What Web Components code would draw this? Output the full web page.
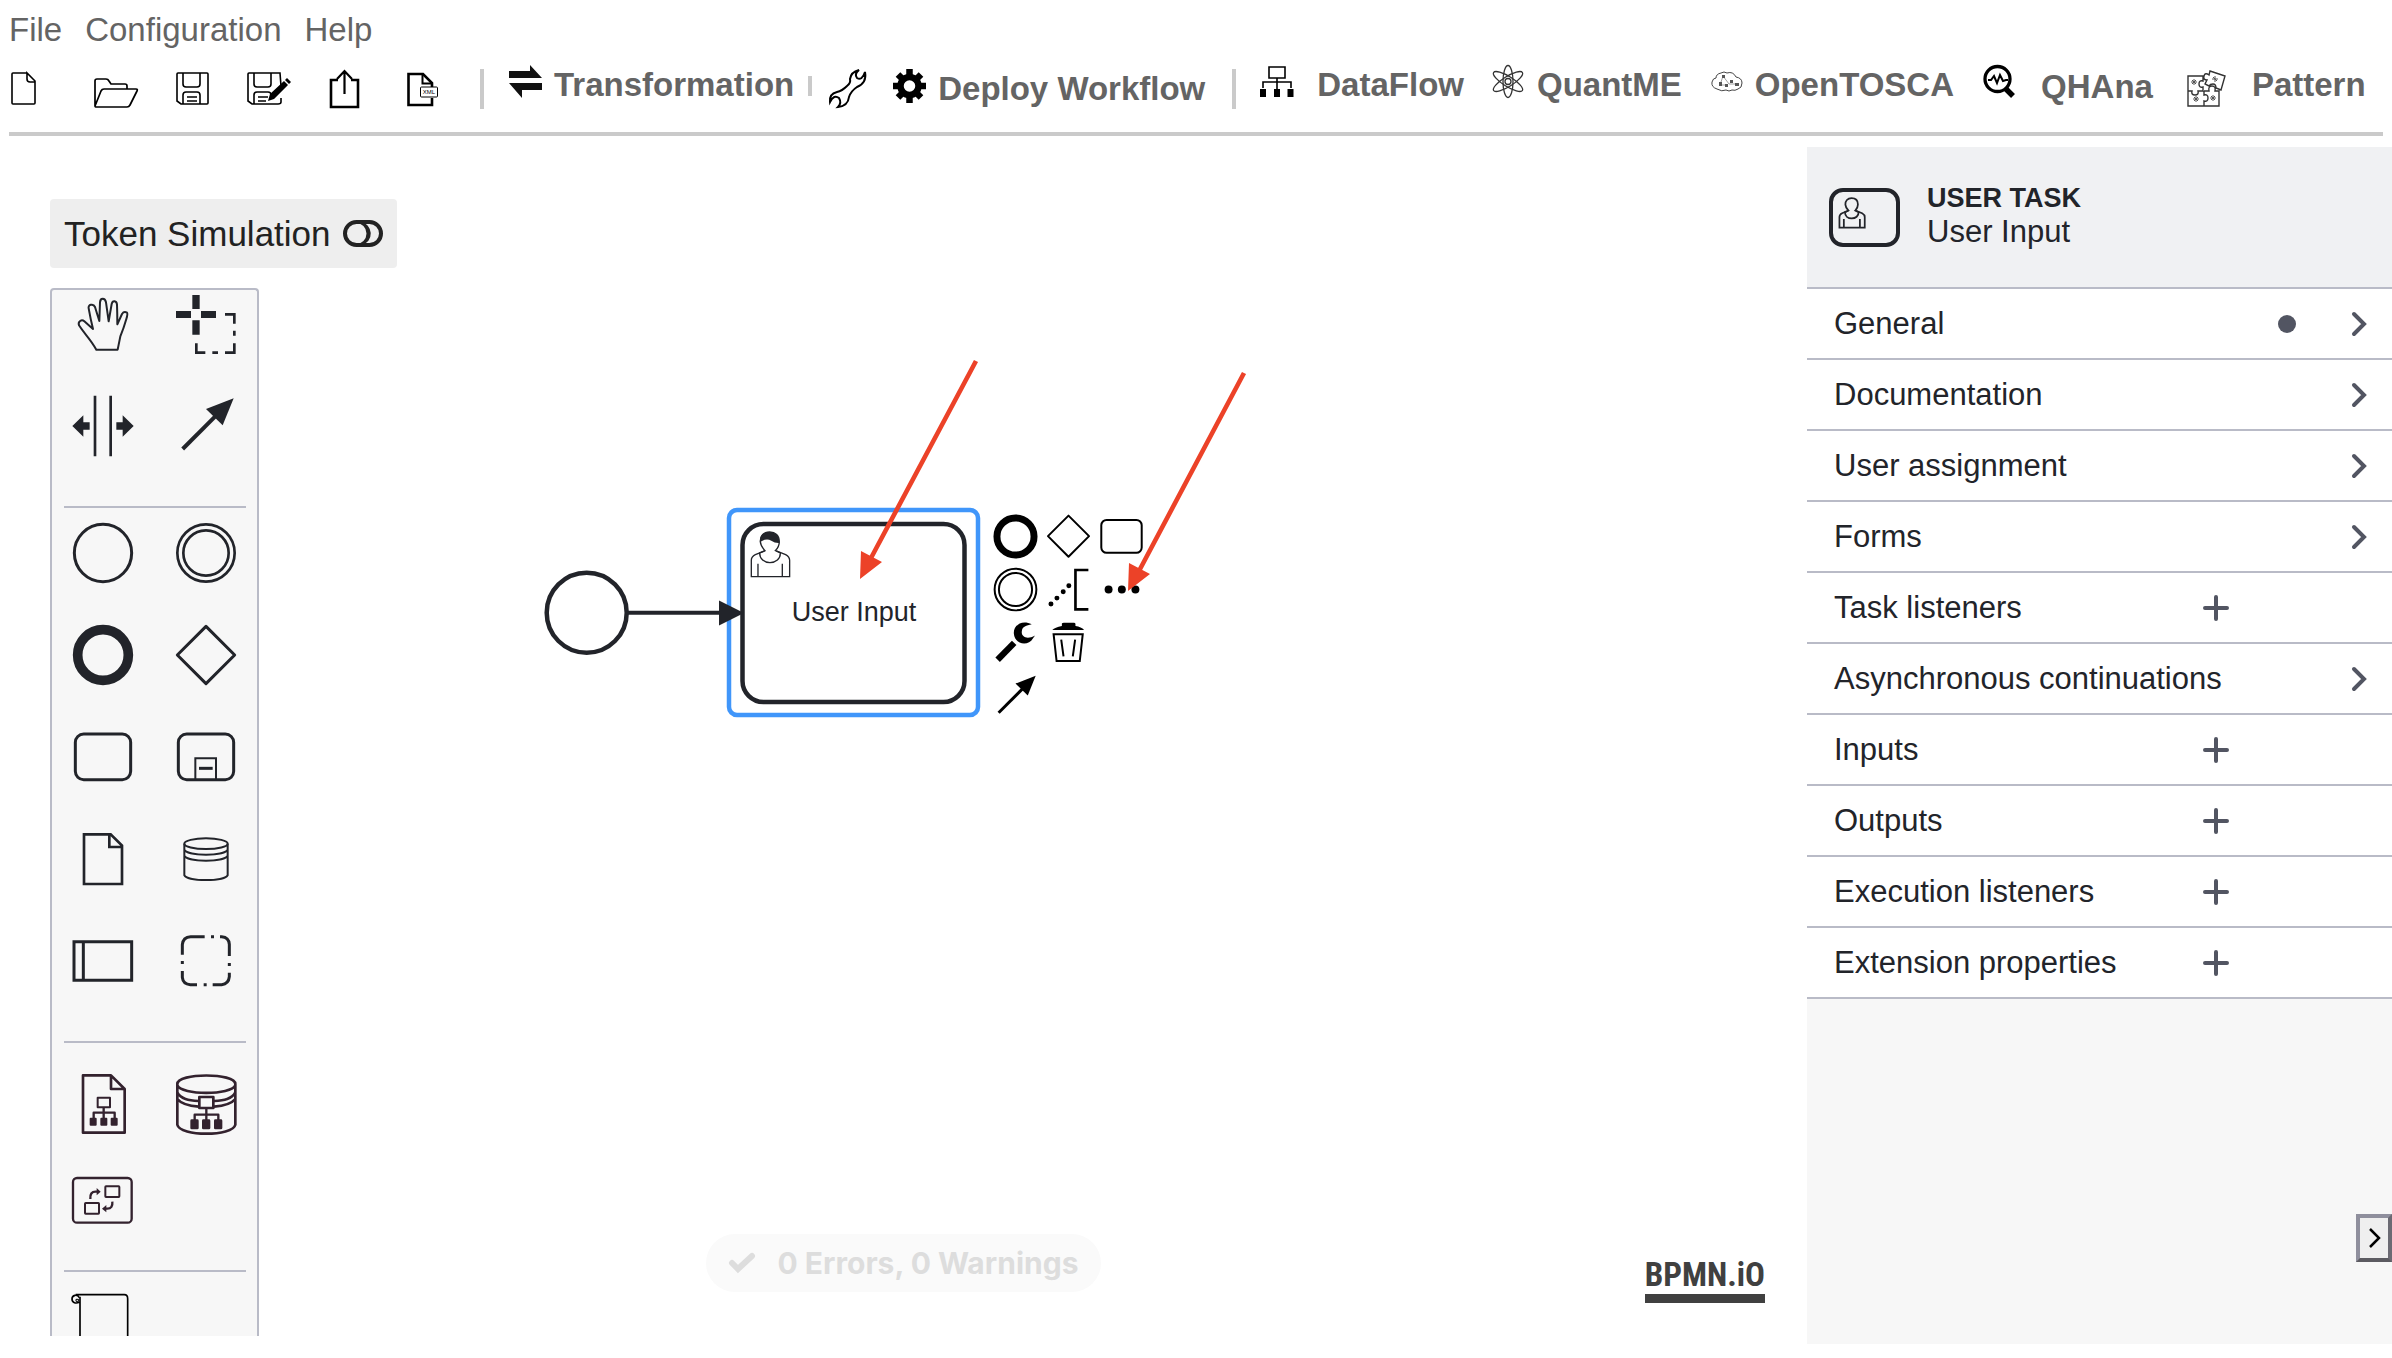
<!DOCTYPE html>
<html lang="en">
<head>
<meta charset="utf-8">
<title>Workflow Modeler</title>
<style>
html,body{margin:0;height:100%;background:#fff}
body{font-family:"Liberation Sans",Arial,sans-serif;overflow:hidden}
</style>
</head>
<body>
<modeler-app></modeler-app>
<script>
/* Icon name -> [viewBox, markup] */
const person = '<path d="M719 576c-18 0-29 12-28 29 1 13 8 20 14 27l-16 7c0 18 14 29 31 29s32-11 31-29l-15-7c7-7 12-16 12-27 0-19-12-29-29-29z"/><path d="M704 633l-28 11c-8 4-12 9-12 17v49h115v-49c0-8-5-13-12-17l-28-11M684 671v38M757 671v38" />';
const ICONS = {
  file: ['9 65 49 44','<path d="M27 73H13q-1 0-1 1v29q0 1 1 1h21q1 0 1-1V81L27 73v6q0 3 3 3h5" stroke-width="1.6"/>'],
  folder: ['92 65 48 44','<path d="M95 106V81q0-2 2-2h9q2 0 3 2l2 3h14q2 0 2 2v3M95 106l6-15q1-2 3-2h32q2 0 1 2l-7 14q-1 2-3 2H97q-2 0-2-1z" stroke-width="1.7"/>'],
  save: ['174 65 37 44','<path d="M178 73h29q1 0 1 1v29q0 1-1 1h-26l-4-3V74q0-1 1-1zM183 73v11q0 3 3 3h11q3 0 3-3V73M183 104v-9q0-3 3-3h11q3 0 3 3v9M187 97h10M187 101h10" stroke-width="1.6"/>'],
  saveas: ['245 65 48 44','<path d="M278 104h-26l-4-3V74q0-1 1-1h31l1 13M254 73v11q0 3 3 3h11q3 0 3-3V73M254 104v-9q0-3 3-3h11q3 0 3 3M258 97h10M258 101h8M281 98v4q0 2-3 2" stroke-width="1.6"/><path d="M268 101l2-7 14-13 4 4-14 14zM285 80l2-2 4 4-2 2z" fill="#000" stroke="none"/>'],
  exporti: ['327 65 44 44','<path d="M338 80h-7v27h27V80h-7" stroke-width="2.6"/><path d="M344.500 94V71M337 79l7.500-8 7.500 8" stroke-width="2.2"/>'],
  xml: ['405 65 41 44','<path d="M432 87v-4l-9-9h-14.500v31H432v-7" stroke-width="2.600"/><path d="M422.500 74v9.500h9" stroke-width="2"/><rect x="420.500" y="87" width="17" height="10" rx="1" fill="#fff" stroke-width="1"/><text x="429" y="94" font-size="6" text-anchor="middle" fill="#000" stroke="none">XML</text>'],
  transform: ['509 65 33 44','<path d="M509 71h21v-6l12 13h-33zM542 90h-20v8l-13-15h33z" fill="#111" stroke="none"/>'],
  wrench: ['829 65 37 44','<path d="M859 70Q851 72 850 79Q851 83 847 86Q842 91 837 92Q829 94 830 102Q834 94 839 98Q842 103 838 107Q848 106 849 97Q851 91 857 87Q867 83 865 72Q862 81 857 78Q854 74 859 70z" stroke-width="2"/>'],
  gear: ['893 65 33 44','<g stroke-width="6.500"><circle cx="909.500" cy="86" r="9"/><path d="M909.500 69v9M909.500 94v9M893 86h8M918 86h8M898 74.500l6 6M915 91.500l6 6M898 97.500l6-6M915 80.500l6-6"/></g>'],
  dataflow: ['1260 65 45 44','<path d="M1269 67h16v11h-16zM1277 78v11M1263 88v-6h28v6" stroke-width="1.6"/><path d="M1260 89h6v8h-6zM1274 89h6v8h-6zM1287.500 89h6v8h-6z" fill="#000" stroke="none"/>'],
  atom: ['1493 65 32 44','<g stroke="#333" stroke-width="1.3"><ellipse cx="1508" cy="81.500" rx="5" ry="16"/><ellipse cx="1508" cy="81.500" rx="5" ry="17" transform="rotate(58 1508 81.500)"/><ellipse cx="1508" cy="81.500" rx="5" ry="17" transform="rotate(-58 1508 81.500)"/><circle cx="1508" cy="81.500" r="3"/></g>'],
  cloud: ['1711 65 32 44','<path d="M1717 89q-6-2-5-7 1-4 4-4 0-4 5-5 3-2 6 0 6-2 9 4 6 1 6 6t-4 6q-3 2-6 1-3 2-6 0-4 2-9-1z" stroke="#444" stroke-width="1"/><path d="M1723 76l-3 9M1723 76l6 8h6M1720 85h7" stroke="#777" stroke-width=".7"/><path d="M1722 75h3v3h-3zM1719 82h3v4h-3zM1725 84h3v3h-3zM1730 80h3v3h-3zM1735 83h4v3h-4z" fill="#555" stroke="none"/>'],
  qhana: ['1983 65 46 44','<circle cx="1997.500" cy="79" r="12.500" stroke-width="3.300"/><path d="M2006 89l7 7" stroke-width="5.500"/><path d="M1988 80h3l3-4 3 7 3-8 3 6 3-1h2" stroke-width="2"/>'],
  pattern: ['2181 65 58 44','<g stroke="#333" stroke-width="1.4"><path d="M2187 76h15v5q-4-1-4 3t4 3v4h-5q1 4-3 4t-3-4h-4zM2187 91v15h16v-5q4 1 4-3t-4-3v-4M2203 91h5q-1-5 3-5t3 5h4v15h-15M2209 71l15 5-4 14-5-2q0-4-3-4t-4 2l-4-2 2-4q-4 0-3-4t5-1z"/></g><g fill="#555" stroke="#555" stroke-width="1"><path d="M2190 82h6M2193 79v6M2191 80l4 4M2195 80l-4 4M2192 99h6M2195 96v6M2193 97l4 4M2197 97l-4 4M2209 98h6M2212 95v6M2210 96l4 4M2214 96l-4 4M2211 79h6M2214 76v6M2212 77l4 4"/></g>'],

  hand: ['128 336 186 186','<path d="M201 506h64l8-40q10-24 18-52 5-16 2-19-9-5-15 4l-14 31q0-34-1-59c-1-12-13-14-16-2l-9 52-8-57c-3-14-17-14-18 0l-2 56-13-42c-5-12-22-7-19 4q6 34 13 62l-26-23c-8-7-20 0-16 12 15 24 34 40 52 73z" stroke-width="6" stroke-linejoin="round"/>'],
  lasso: ['435 336 186 186','<g fill="#22242a" stroke="none"><path d="M487 342h22v42h-22zM487 418h22v43h-22zM438 390h45v21h-45zM513 390h45v21h-45z"/></g><path d="M585 400h28v28M613 449v15M613 487v28h-28M564 515h-17M526 515h-27v-28" stroke-width="8"/>'],
  space: ['128 644 186 186','<path d="M197 646v182M244 646v182" stroke-width="8"/><path d="M129 737l33-32v21h19v22h-19v21zM313 737l-33-32v21h-19v22h19v21z" fill="#22242a" stroke="none"/>'],
  connect: ['435 644 186 186','<path d="M458 806l100-100" stroke-width="12"/><path d="M611 654l-83 32 50 49z" fill="#22242a" stroke="none"/>'],
  start: ['128 1024 186 186','<circle cx="221" cy="1117" r="86" stroke-width="9"/>'],
  inter: ['435 1024 186 186','<circle cx="528" cy="1117" r="86" stroke-width="8"/><circle cx="528" cy="1117" r="68" stroke-width="8"/>'],
  end: ['128 70 186 186','<circle cx="221" cy="163" r="76" stroke-width="29"/>'],
  gateway: ['435 70 186 186','<path d="M528 77l86 86-86 86-86-86z" stroke-width="9" stroke-linejoin="round"/>'],
  task: ['128 377 186 186','<rect x="138" y="401" width="166" height="137" rx="25" stroke-width="9"/>'],
  sub: ['435 377 186 186','<rect x="445" y="401" width="166" height="137" rx="25" stroke-width="9"/><path d="M496 538v-64h62v64" stroke-width="6"/><path d="M507 504h41" stroke-width="9"/>'],
  doc: ['128 682 186 186','<path d="M164 701h80l34 34v115H164zM240 701v38h38" stroke-width="8"/>'],
  store: ['435 682 186 186','<g stroke-width="6"><ellipse cx="528" cy="729" rx="65" ry="16"/><path d="M463 729v95c10 19 120 19 130 0v-95M463 747c10 20 120 20 130 0M463 765c10 20 120 20 130 0"/></g>'],
  pool: ['128 990 186 186','<path d="M134 1025h173v116H134zM162 1025v116" stroke-width="9"/>'],
  group: ['435 990 186 186','<path d="M457 1064v-30q2-23 25-24h42M543 1010h9M570 1010h5q22 2 23 23v35M598 1089v9M598 1118v12q-2 22-23 24h-27M530 1154h-9M501 1154h-20q-22-2-24-22v-19M457 1092v-9" stroke-width="9"/>'],
  dfdoc: ['128 219 186 186','<g stroke="#33222e" stroke-width="8" stroke-linejoin="round"><path d="M161 226h84l41 41v131H161zM245 226v41h41"/><path d="M205 293h37v29h-37z" stroke-width="6"/><path d="M223 322v32M193 354v-16h63v16" stroke-width="7"/><g fill="#33222e" stroke-width="6"><path d="M184 356h15v18h-15zM216 356h15v18h-15zM247 356h15v18h-15z"/></g></g>'],
  dfstore: ['435 219 186 186','<g stroke="#33222e" stroke-width="8" stroke-linejoin="round"><path d="M442 252c0-34 174-34 174 0v122c-8 36-166 36-174 0zM442 256c12 30 162 30 174 0M442 277c10 20 34 24 64 26M616 277c-10 20-34 24-64 26M442 297c12 15 38 21 64 23M616 297c-12 15-38 21-64 23"/><path d="M508 291h42v33h-42z"/><path d="M529 324v36M494 360v-16h71v16" stroke-width="7"/><g fill="#33222e"><path d="M485 362h17v22h-17zM520 362h17v22h-17zM556 362h17v22h-17z"/></g></g>'],
  dftrans: ['128 507 186 186','<g stroke="#33222e" stroke-width="7"><rect x="131" y="534" width="176" height="134" rx="12"/><rect x="228" y="559" width="42" height="32" rx="2" stroke-width="6"/><rect x="167" y="609" width="42" height="32" rx="2" stroke-width="6"/><path d="M183 597q-2-22 16-22h6M249 605q2 21-15 21h-6"/><path d="M202 564v22l12-11zM231 615v22l-13-11z" fill="#33222e" stroke="none"/></g>'],
  scroll: ['128 855 186 186','<g stroke="#000" stroke-width="5"><path d="M139 884h146q10 0 10 12v150M152 1046V890M150 893c-6-12-22-8-22 4s12 14 22 10"/><path d="M140 898h8v6h-8z" stroke-width="3"/></g>'],

  cEnd: ['87 508 160 160','<circle cx="167" cy="588" r="56" stroke-width="21"/>'],
  cGate: ['247 508 160 160','<path d="M327 525l62 62-62 62-62-62z" stroke-width="6" stroke-linejoin="round"/>'],
  cTask: ['407 508 160 160','<rect x="426" y="538" width="122" height="99" rx="16" stroke-width="6"/>'],
  cInter: ['87 666 160 160','<circle cx="167" cy="746" r="63" stroke-width="6"/><circle cx="167" cy="746" r="50" stroke-width="6"/>'],
  cNote: ['247 666 160 160','<path d="M387 687h-39v119h39" stroke-width="8"/><path d="M274 790h.1M292 772h.1M311 753h.1M328 735h.1" stroke-width="15" stroke-linecap="round"/>'],
  cMore: ['407 666 160 160','<g fill="#000" stroke="none"><circle cx="448" cy="746" r="12"/><circle cx="488" cy="746" r="12"/><circle cx="529" cy="746" r="12"/></g>'],
  cWrench: ['87 827 160 160','<path d="M113 959l50-51" stroke-width="19"/><path d="M216 852c-30-16-56 4-54 28 2 32 42 42 58 14l6-8c-24 14-42 4-40-12 1-16 14-18 30-22z" fill="#000" stroke="none"/>'],
  cTrash: ['247 827 160 160','<path d="M278 869q8-8 29-12v-7q1-3 6-3h30q5 0 5 4v6q18 3 26 12z" fill="#000" stroke="none"/><path d="M282 882h88l-9 81h-70zM305 898l7 51M347 898l-7 51" stroke-width="6"/>'],
  cConnect: ['87 986 160 160','<path d="M116 1118l72-72" stroke-width="9"/><path d="M228 1006l-61 24 37 36z" fill="#000" stroke="none"/>'],

  toggle: ['343 220 40 27','<rect x="345" y="222" width="36" height="23" rx="11.500" stroke-width="4"/><path d="M356 222a11.500 11.500 0 0 1 0 23h4c14-4 12-20 0-23z" fill="#222" stroke-width="2"/>'],
  userTask: ['0 0 71 59','<rect x="2" y="2" width="67" height="55" rx="12" stroke-width="4"/><g transform="translate(10 10) scale(.22) translate(-662 -575)" stroke-width="8">'+person+'</g>'],
  plus: ['0 0 26 26','<path d="M13 2v22M2 13h22" stroke-width="4" stroke-linecap="round"/>'],
  chev: ['0 0 15 24','<path d="M2 2l10 10L2 22" stroke-width="4" stroke-linecap="round"/>'],
  dot: ['0 0 18 18','<circle cx="9" cy="9" r="9" fill="currentColor" stroke="none"/>'],
  chevThin: ['0 0 12 20','<path d="M2 1l9 9-9 9" stroke-width="2.500"/>'],
  check: ['0 0 26 20','<path d="M3 10l6 6L23 3" stroke-width="6" stroke-linecap="round"/>']
};

function define(name, html, setup) {
  const t = document.createElement('template');
  t.innerHTML = html;
  customElements.define(name, class extends HTMLElement {
    constructor() {
      super();
      this.attachShadow({mode: 'open'}).append(t.content.cloneNode(true));
    }
    connectedCallback() { if (setup) setup.call(this, this.shadowRoot); }
  });
}

const RESET = '*{box-sizing:border-box}button{appearance:none;border:0;background:none;padding:0;margin:0;font:inherit;color:inherit;cursor:pointer;text-align:left}';

/* Icon: width and height default to the viewBox, or come from "size" */
define('m-icon', '<style>:host{display:inline-flex;flex:none}svg{display:block;overflow:visible;fill:none;stroke:currentColor}</style>', function (root) {
  const [box, art] = ICONS[this.getAttribute('name')];
  const [, , w, h] = box.split(' ');
  const s = this.getAttribute('size');
  root.innerHTML += `<svg viewBox="${box}" width="${s || w}" height="${s || h}" aria-hidden="true">${art}</svg>`;
});

define('menu-bar', `<style>${RESET}
:host{display:flex;gap:23px;height:40px;font-size:33px;line-height:40px;color:#646464}</style>
<button>File</button><button>Configuration</button><button>Help</button>`);

/* Toolbar entry: an icon with an optional label */
define('tool-button', `<style>${RESET}
:host{display:block;height:44px;--align:flex-start}
:host([align=center]){--align:center}
:host([align=end]){--align:flex-end}
button{display:flex;height:44px;gap:12px}
m-icon{color:#000}
slot{display:block}
span{align-self:var(--align);font-size:33px;font-weight:700;line-height:40px;color:#646464;white-space:nowrap}
:host(:not([label])) span{display:none}</style>
<button><span><slot></slot></span></button>`, function (root) {
  const button = root.querySelector('button');
  button.insertAdjacentHTML('afterbegin', `<m-icon name="${this.getAttribute('icon')}"></m-icon>`);
  if (this.title) button.setAttribute('aria-label', this.title);
});

define('tool-bar', `<style>${RESET}
:host{display:flex;align-items:flex-start;height:67px;border-bottom:4px solid #cacaca;box-sizing:content-box}
.g{display:flex}
.files{gap:34px}.plugins{gap:29px}
i{flex:none;width:4px;height:40px;margin-top:4px;background:#cacaca}
i.s{height:20px;margin-top:11px}
.t{margin:0 14px 0 25px}.w{margin:0 27px 0 17px}.d{margin-right:27px}
.plugins{margin-left:24px}.files{margin-right:34px}</style>
<div class="g files">
<tool-button icon="file" title="New"></tool-button><tool-button icon="folder" title="Open"></tool-button><tool-button icon="save" title="Save"></tool-button><tool-button icon="saveas" title="Save as"></tool-button><tool-button icon="exporti" title="Upload"></tool-button><tool-button icon="xml" title="XML"></tool-button>
</div><i></i>
<tool-button class="t" icon="transform" label>Transformation</tool-button><i class="s"></i>
<tool-button class="w" icon="wrench" title="Adapt"></tool-button>
<tool-button class="d" icon="gear" align="end" label>Deploy Workflow</tool-button><i></i>
<div class="g plugins">
<tool-button icon="dataflow" label>DataFlow</tool-button><tool-button icon="atom" label>QuantME</tool-button><tool-button icon="cloud" label>OpenTOSCA</tool-button><tool-button icon="qhana" align="center" label>QHAna</tool-button><tool-button icon="pattern" label>Pattern</tool-button>
</div>`);

define('token-toggle', `<style>${RESET}
:host{display:block}
button{display:flex;align-items:center;gap:12px;height:69px;padding:0 14px;border-radius:4px;background:#eee;color:#222;font-size:35px}</style>
<button>Token Simulation<m-icon name="toggle"></m-icon></button>`);

define('tool-palette', `<style>${RESET}
:host{display:block;width:209px;border:2px solid #b9bbc7;border-bottom:0;border-radius:4px 4px 0 0;background:#f7f7f7;color:#22242a;overflow:hidden;padding-top:3px}
div{display:grid;grid-template-columns:62px 62px;gap:40px 41px;padding:0 20px}
div.p{row-gap:34px;padding-top:16px}
hr{height:2px;border:0;background:#b9bbc7;margin:49px 11px 14px 12px}
hr.n{margin:39px 11px 13px 12px}
button{height:62px}</style>`, function (root) {
  const row = (cls, names) => `<div class="${cls}">` + names.map(n => `<button aria-label="${n}"><m-icon name="${n}" size="62"></m-icon></button>`).join('') + '</div>';
  root.innerHTML += row('', ['hand', 'lasso', 'space', 'connect']) + '<hr>' +
    row('', ['start', 'inter', 'end', 'gateway', 'task', 'sub', 'doc', 'store', 'pool', 'group']) + '<hr>' +
    row('p', ['dfdoc', 'dfstore', 'dftrans']) + '<hr class="n">' + row('', ['scroll']);
});

define('context-pad', `<style>${RESET}
:host{display:grid;grid-template-columns:repeat(3,53px);grid-auto-rows:53px;color:#000}
.r{grid-column:1}</style>
`, function (root) {
  root.innerHTML += ['cEnd', 'cGate', 'cTask', 'cInter', 'cNote', 'cMore', 'cWrench', 'cTrash', 'cConnect'].map(n =>
    `<button aria-label="${n.slice(1)}" class="${n === 'cConnect' ? 'r' : ''}"><m-icon name="${n}" size="53"></m-icon></button>`).join('');
});

define('diagram-canvas', `<style>${RESET}
:host{display:block;position:relative;overflow:hidden;background:#fff}
.layer{position:absolute;inset:0;width:100%;height:100%;fill:none}
.marks{pointer-events:none}
text{font:27px "Liberation Sans",Arial,sans-serif;fill:#22242a;text-anchor:middle}
.tools{position:relative;display:flex;flex-direction:column;align-items:flex-start;gap:20px;width:max-content;height:100%;padding:52px 0 0 50px}
tool-palette{flex:1;min-height:0}
context-pad{position:absolute;left:989px;top:363px}
.lint{position:absolute;left:0;right:0;bottom:44px;width:max-content;margin:0 auto;display:flex;align-items:center;gap:23px;height:58px;padding:0 23px;border-radius:29px;background:#fafafa;color:#ddd;font:700 30px Inter,sans-serif}
.logo{position:absolute;right:42px;bottom:33px;border-bottom:9px solid #404040;color:#404040;text-decoration:none;font:700 33px/38px "Roboto Condensed","Liberation Sans Narrow","Liberation Sans",sans-serif}
</style>
<svg class="layer"><g transform="translate(0 -147)" stroke="#22242a" stroke-width="4.500">
<circle cx="586.700" cy="612.700" r="40"/>
<rect x="729" y="510" width="249" height="205" rx="8" stroke="#4096fa"/>
<rect x="742.500" y="524" width="222" height="178" rx="21" fill="#fff"/>
<path d="M628 612.700h95" stroke-width="4"/><path d="M719 600.500v25l25-12.500z" fill="#22242a" stroke="none"/>
<g transform="translate(530 340) scale(.3333)" stroke-width="4">${person}<path d="M690 607q-2-31 29-31 30 0 29 33-13 1-24-7-16-9-34 5z" fill="#22242a" stroke="none"/></g>
<text x="854" y="621" stroke="none">User Input</text></g></svg>
<div class="tools"><token-toggle></token-toggle><tool-palette></tool-palette></div>
<context-pad></context-pad>
<svg class="layer marks"><g transform="translate(0 -147)" stroke="#ec4228" stroke-width="4.600">
<path d="M976 361L871 558M1244 373L1139 571"/>
<path d="M860 579l1-28 21 11zM1128 591l1-28 21 11z" fill="#ec4228" stroke="none"/></g></svg>
<button class="lint"><m-icon name="check"></m-icon>0 Errors, 0 Warnings</button>
<a class="logo" href="#">BPMN.iO</a>`);

define('property-group', `<style>${RESET}
:host{display:block;border-bottom:2px solid #b9bbc7;background:#fff}
button{display:grid;grid-template-columns:minmax(0,1fr) 26px 25px 15px;column-gap:49px;align-items:center;width:100%;height:69px;padding:0 25px 0 27px;font-size:31px;color:#22242a}
span{grid-column:1/3;white-space:nowrap}
:host([kind=list]) span{grid-column:1}
m-icon{color:#525562}
[name=chev]{grid-column:4}[name=dot]{grid-column:3}[name=plus]{grid-column:2}
:host([kind=list]) [name=chev],:host(:not([kind=list])) [name=plus],:host(:not([filled])) [name=dot]{display:none}</style>
<button><span><slot></slot></span><m-icon name="plus"></m-icon><m-icon name="dot"></m-icon><m-icon name="chev"></m-icon></button>`);

define('properties-panel', `<style>${RESET}
:host{display:block;position:relative;background:#f7f7f7;color:#22242a}
header{display:flex;align-items:center;gap:27px;height:142px;padding:0 22px;border-bottom:2px solid #b9bbc7;background:#f0f1f3}
hgroup{padding-bottom:4px}
h2,p{margin:0;font-size:31px;font-weight:400;line-height:34px}
h2{font-size:27px;font-weight:700}
.handle{position:absolute;right:0;bottom:82px;width:36px;height:48px;display:grid;place-items:center;border:4px solid;border-color:#8f8f9d #6b6a73 #5c5b61 #8f8f9d;background:#efefef;color:#000}</style>
<header><m-icon name="userTask"></m-icon><hgroup><h2>USER TASK</h2><p>User Input</p></hgroup></header>
<property-group filled>General</property-group>
<property-group>Documentation</property-group>
<property-group>User assignment</property-group>
<property-group>Forms</property-group>
<property-group kind="list">Task listeners</property-group>
<property-group>Asynchronous continuations</property-group>
<property-group kind="list">Inputs</property-group>
<property-group kind="list">Outputs</property-group>
<property-group kind="list">Execution listeners</property-group>
<property-group kind="list">Extension properties</property-group>
<button class="handle" aria-label="Toggle panel"><m-icon name="chevThin"></m-icon></button>`);

define('modeler-app', `<style>
:host{display:flex;flex-direction:column;height:100vh}
header{display:flex;flex-direction:column;gap:15px;padding:10px 9px 11px}
main{display:flex;flex:1;min-height:0;margin-bottom:14px}
diagram-canvas{flex:1;min-width:0;margin-bottom:8px}
properties-panel{flex:0 0 585px}</style>
<header><menu-bar></menu-bar><tool-bar></tool-bar></header>
<main><diagram-canvas></diagram-canvas><properties-panel></properties-panel></main>`);
</script>
</body>
</html>
